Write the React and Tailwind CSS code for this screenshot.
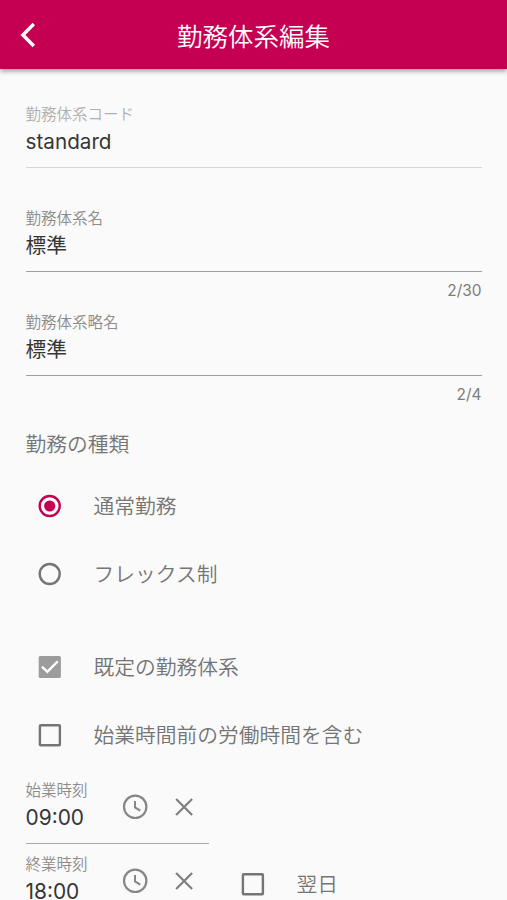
import React, { useState } from 'react';

function BackIcon() {
  return (
    <svg width="16" height="26" viewBox="0 0 16 26" fill="none" stroke="#fff" strokeWidth="3.4">
      <path d="M13.8 2 2.9 13l10.9 11" />
    </svg>
  );
}

function RadioIcon({ checked }) {
  const color = checked ? '#c50052' : '#757575';
  return (
    <svg width="24" height="24" viewBox="0 0 24 24">
      <circle cx="11.7" cy="12" r="10" fill="none" stroke={color} strokeWidth="2.4" />
      {checked && <circle cx="11.7" cy="12" r="5.6" fill={color} />}
    </svg>
  );
}

function CheckIcon({ checked, disabled }) {
  const color = disabled ? '#9c9c9c' : '#757575';
  return (
    <svg width="24" height="24" viewBox="0 0 24 24" fill="none">
      {checked ? (
        <>
          <rect x="0.7" y="1" width="22.2" height="22" rx="1.5" fill={color} />
          <path d="M4 11.6 9.3 16.8 19.7 6.4" stroke="#fff" strokeWidth="2.3" />
        </>
      ) : (
        <rect x="1.9" y="2.2" width="20" height="20" rx="0.8" stroke={color} strokeWidth="2.4" />
      )}
    </svg>
  );
}

function ClockIcon() {
  return (
    <svg width="26" height="26" viewBox="0 0 26 26" fill="none" stroke="#868686">
      <circle cx="13.2" cy="12.8" r="11.2" strokeWidth="2.2" />
      <path d="M13 7v6.4l5.3 3.2" strokeWidth="2" />
    </svg>
  );
}

function CloseIcon() {
  return (
    <svg width="18" height="18" viewBox="0 0 18 18" fill="none" stroke="#808080" strokeWidth="2.3">
      <path d="M1.1 1l16 16M17.1 1 1.1 17" />
    </svg>
  );
}

function TextField({ label, value, max, disabled }) {
  return (
    <div className="h-[104px]">
      <div className={`border-b pb-[8px] ${disabled ? 'border-[#d6d6d6]' : 'border-[#a0a0a0]'}`}>
        <div className={`h-5 text-[15.5px] leading-5 font-[350] ${disabled ? 'text-[#b0b0b0]' : 'text-[#8c8c8c]'}`}>
          {label}
        </div>
        <div className="h-[34px] text-[20.7px] leading-[34px] text-[#363636]">{value}</div>
      </div>
      {max && (
        <div className="pt-[9px] text-right text-[15.4px] leading-5 text-[#7c7c7c]">
          {value.length}/{max}
        </div>
      )}
    </div>
  );
}

function Option({ icon, label, onClick }) {
  return (
    <div className="flex h-[68px] items-center gap-8 pl-3 text-[20.75px] text-[#757575]" onClick={onClick}>
      {icon}
      <span className="pt-[2px] font-[350]">{label}</span>
    </div>
  );
}

function TimeField({ label, value }) {
  return (
    <div className="flex h-[63px] w-[183px] shrink-0 border-b border-[#a8a8a8]">
      <div className="w-24">
        <div className="h-5 text-[15.5px] leading-5 font-[350] text-[#8c8c8c]">{label}</div>
        <div className="h-[34px] text-[20.9px] leading-[34px] text-[#363636]">{value}</div>
      </div>
      <div className="flex h-[51px] items-center gap-[27px]">
        <ClockIcon />
        <CloseIcon />
      </div>
    </div>
  );
}

export default function App() {
  const [workType, setWorkType] = useState('normal');
  const [includeEarly, setIncludeEarly] = useState(false);
  const [nextDay, setNextDay] = useState(false);

  return (
    <div className="h-[900px] w-full overflow-hidden bg-[#fafafa] font-['Inter','Noto_Sans_CJK_JP',sans-serif]">
      {/* Header */}
      <header className="grid h-[69px] grid-cols-[60px_1fr_60px] items-center bg-[#c50052] pt-1 text-white shadow-[0_2px_5px_rgba(0,0,0,0.4)]">
        <div className="pb-[3px] pl-5">
          <BackIcon />
        </div>
        <h1 className="text-center text-[25.5px] leading-9 font-[350]">勤務体系編集</h1>
      </header>

      <main className="px-[25.5px] pt-[36px]">
        <TextField label="勤務体系コード" value="standard" disabled />
        <TextField label="勤務体系名" value="標準" max={30} />
        <TextField label="勤務体系略名" value="標準" max={4} />

        {/* Work type */}
        <h2 className="pt-[13px] text-[20.75px] leading-[30px] font-[350] text-[#757575]">勤務の種類</h2>
        <div className="pt-[12px]">
          <Option
            icon={<RadioIcon checked={workType === 'normal'} />}
            label="通常勤務"
            onClick={() => setWorkType('normal')}
          />
          <Option
            icon={<RadioIcon checked={workType === 'flex'} />}
            label="フレックス制"
            onClick={() => setWorkType('flex')}
          />
        </div>

        <div className="pt-[25px]">
          <Option icon={<CheckIcon checked disabled />} label="既定の勤務体系" />
          <Option
            icon={<CheckIcon checked={includeEarly} />}
            label="始業時間前の労働時間を含む"
            onClick={() => setIncludeEarly(!includeEarly)}
          />
        </div>

        {/* Start / end time */}
        <div className="flex flex-col gap-[11px] pt-[12px]">
          <TimeField label="始業時刻" value="09:00" />
          <div className="flex">
            <TimeField label="終業時刻" value="18:00" />
            <div
              className="flex h-[58px] items-center gap-8 pl-8 text-[20.75px] text-[#757575]"
              onClick={() => setNextDay(!nextDay)}
            >
              <CheckIcon checked={nextDay} />
              <span className="pt-[2px] font-[350]">翌日</span>
            </div>
          </div>
        </div>
      </main>
    </div>
  );
}
